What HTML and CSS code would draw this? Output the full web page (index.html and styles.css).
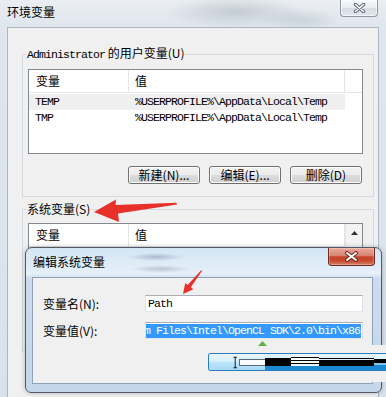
FILE: index.html
```html
<!DOCTYPE html>
<html lang="zh-CN">
<head>
<meta charset="utf-8">
<title>环境变量</title>
<link rel="stylesheet" href="styles.css">
</head>
<body>
<div class="win">
  <div class="titlebar">
    <span class="title">环境变量</span>
    <div class="cap-close">
      <svg width="13" height="10" viewBox="0 0 13 10"><path class="x-out" d="M2.5 1.5 L10.5 8.5 M10.5 1.5 L2.5 8.5"/><path class="x-in" d="M2.5 1.5 L10.5 8.5 M10.5 1.5 L2.5 8.5"/></svg>
    </div>
  </div>
  <div class="client">
    <fieldset class="group">
      <legend><span class="mono">Administrator</span> 的用户变量(U)</legend>
      <div class="list user">
        <div class="lhead"><div class="c1">变量</div><div class="c2">值</div></div>
        <div class="lbody">
          <div class="lrow inactive"><div class="c1 mono">TEMP</div><div class="c2 mono">%USERPROFILE%\AppData\Local\Temp</div></div>
          <div class="lrow"><div class="c1 mono">TMP</div><div class="c2 mono">%USERPROFILE%\AppData\Local\Temp</div></div>
        </div>
      </div>
      <div class="btnrow">
        <button class="btn">新建(N)...</button>
        <button class="btn">编辑(E)...</button>
        <button class="btn">删除(D)</button>
      </div>
    </fieldset>
    <fieldset class="group sys">
      <legend>系统变量(S)</legend>
      <div class="list syslist">
        <div class="lmain">
          <div class="lhead"><div class="c1">变量</div><div class="c2">值</div></div>
          <div class="lrow sel"></div>
        </div>
        <div class="vscroll">
          <div class="sbtn"><svg width="7" height="4" viewBox="0 0 7 4"><polygon points="0,4 3.5,0 7,4" fill="#333"/></svg></div>
        </div>
      </div>
    </fieldset>
  </div>
</div>

<div class="dlg">
  <div class="dtitlebar">
    <span class="dtitle">编辑系统变量</span>
    <div class="dclose">
      <svg width="15" height="11" viewBox="0 0 15 11"><path class="dx-out" d="M3 2 L12 9 M12 2 L3 9"/><path class="dx-in" d="M3 2 L12 9 M12 2 L3 9"/></svg>
    </div>
  </div>
  <div class="dclient">
    <div class="frow">
      <span class="flabel">变量名(N):</span>
      <div class="input"><span class="mono">Path</span></div>
    </div>
    <div class="frow">
      <span class="flabel">变量值(V):</span>
      <div class="input selected"><span class="selbox mono">m Files\Intel\OpenCL SDK\2.0\bin\x86</span></div>
    </div>
    <div class="dfoot">
      <svg class="tri" width="9" height="5" viewBox="0 0 9 5"><polygon points="0,5 4.5,0 9,5" fill="#5fb14a"/></svg>
      <div class="okbar">
        <div class="seg s1">
          <svg class="ibeam" width="5" height="13" viewBox="0 0 5 13"><path d="M0.5 0.5 H4.5 M2.5 0.5 V12.5 M0.5 12.5 H4.5" stroke="#000" stroke-width="1" fill="none"/></svg>
          <span class="tbox"></span>
        </div>
        <div class="seg s2"></div>
        <div class="seg s3"></div>
        <div class="seg s4"></div>
        <div class="seg s5"></div>
      </div>
    </div>
  </div>
</div>

<svg class="arrows" width="386" height="397" viewBox="0 0 386 397">
  <polygon points="94,212 116,199.5 115.5,205 176.5,202.8 177,204.4 118,213.5 119,222" fill="#e8302a"/>
  <polygon points="183,294 185.3,283 187.6,284.9 201.2,270.2 202,270.9 190.8,287.3 193.4,289.3" fill="#e8302a"/>
</svg>
</body>
</html>
```

FILE: styles.css
```css
* { box-sizing: border-box; }
html, body { margin: 0; padding: 0; }
body {
  width: 386px;
  height: 397px;
  overflow: hidden;
  position: relative;
  font-family: "Noto Sans CJK SC", "Noto Sans", sans-serif;
  font-size: 12px;
  color: #000;
  background: #f4f6f8;
}
.mono {
  font-family: "Liberation Mono", "Noto Sans CJK SC", monospace;
  font-size: 11.5px;
  letter-spacing: -0.9px;
}

/* outer window */
.win {
  height: 397px;
  display: flex;
  flex-direction: column;
  padding: 0 7px;
  background:
    radial-gradient(70px 16px at 235px 12px, rgba(135,145,158,.35), transparent),
    radial-gradient(40px 12px at 300px 20px, rgba(150,160,172,.3), transparent),
    linear-gradient(#eaeef2, #dfe6ed 27px, #d9e2eb);
}
.titlebar {
  height: 27px;
  display: flex;
  justify-content: space-between;
  align-items: flex-start;
}
.title { margin-top: 5px; line-height: 14px; }
.cap-close {
  width: 38px;
  height: 17px;
  margin-right: 1px;
  border: 1px solid #8d98a4;
  border-top: none;
  border-radius: 0 0 4px 4px;
  background: linear-gradient(#f7f9fb, #e6ebf0 50%, #d6dde5 50%, #e0e6ec);
  box-shadow: inset 0 0 0 1px rgba(255,255,255,.6);
  display: flex;
  align-items: center;
  justify-content: center;
}
.x-out { stroke: #5f6a76; stroke-width: 3.6; stroke-linecap: round; fill: none; }
.x-in { stroke: #fff; stroke-width: 1.6; stroke-linecap: round; fill: none; }

.client {
  flex: 1;
  background: #f0f0f0;
  border: 1px solid #aab6c3;
  border-bottom: none;
  padding-top: 18px;
}
.group {
  margin: 0 0 0 14px;
  width: 352px;
  border: 1px solid #d3dbe2;
  padding: 7px 9px 12px 5px;
}
legend {
  padding: 0 1px;
  margin-left: -2px;
  line-height: 14px;
  font-size: 12px;
}
.sys { margin-top: 5px; padding-bottom: 12px; }

/* list views */
.list {
  width: 335px;
  border: 1px solid #828790;
  background: #fff;
}
.user { height: 85px; }
.lhead {
  display: flex;
  height: 23px;
  line-height: 22px;
  border-bottom: 1px solid #e5e5e5;
}
.c1, .c2 { flex: none; white-space: nowrap; overflow: hidden; }
.c1 { width: 100px; padding-left: 6px; }
.c2 { width: 216px; padding-left: 6px; }
.lhead .c1 { padding-left: 7px; border-right: 1px solid #e5e5e5; }
.lhead .c2 { border-right: 1px solid #e5e5e5; }
.lbody { padding-top: 1px; }
.lrow { display: flex; height: 16px; line-height: 16px; width: 316px; }
.lrow.inactive { background: #efefef; }
.lrow.sel { background: #cde8ff; }

.syslist { display: flex; height: 116px; }
.lmain { width: 316px; }
.vscroll { width: 17px; background: #f3f3f3; border-left: 1px solid #e5e5e5; }
.sbtn {
  height: 17px;
  display: flex;
  align-items: center;
  justify-content: center;
}

/* buttons */
.btnrow {
  margin-top: 12px;
  display: flex;
  justify-content: flex-end;
  gap: 9px;
  padding-right: 2px;
}
.btn {
  width: 72px;
  height: 18px;
  padding: 0;
  font-family: inherit;
  font-size: 12px;
  line-height: 16px;
  color: #000;
  border: 1px solid #707070;
  border-radius: 3px;
  background: linear-gradient(#f2f2f2, #ebebeb 50%, #dddddd 50%, #cfcfcf);
  box-shadow: inset 0 0 0 1px #fcfcfc;
}

/* edit dialog */
.dlg {
  position: absolute;
  left: 25px;
  top: 247px;
  width: 357px;
  height: 146px;
  border: 1px solid #4f5a66;
  border-radius: 7px 7px 6px 6px;
  display: flex;
  flex-direction: column;
  background:
    radial-gradient(28px 4px at 130px 9px, rgba(90,105,125,.35), transparent),
    radial-gradient(30px 4px at 135px 21px, rgba(90,105,125,.3), transparent),
    linear-gradient(#d3e5f5, #e6f0f9 26px, #cbdcee 30px, #c4d7ea);
  box-shadow: 0 0 5px rgba(0,0,0,.25);
}
.dtitlebar {
  height: 29px;
  flex: none;
  display: flex;
  justify-content: space-between;
  align-items: flex-start;
  padding: 0 6px 0 7px;
}
.dtitle { margin-top: 7px; line-height: 14px; }
.dclose {
  width: 47px;
  height: 18px;
  border: 1px solid #6e2a22;
  border-top: none;
  border-radius: 0 0 4px 4px;
  background: linear-gradient(#eaaa9c, #d8836f 45%, #c4432d 52%, #c8492f 75%, #d6806a);
  box-shadow: inset 0 0 0 1px rgba(255,255,255,.25);
  display: flex;
  align-items: center;
  justify-content: center;
}
.dx-out { stroke: #6b2b22; stroke-width: 4; stroke-linecap: round; fill: none; }
.dx-in { stroke: #fff; stroke-width: 2; stroke-linecap: round; fill: none; }

.dclient {
  flex: 1;
  margin: 0 8px 8px 6px;
  background: #f0f0f0;
  border: 1px solid #8ea2b7;
  padding: 17px 0 0 10px;
}
.frow {
  display: grid;
  grid-template-columns: 102px 218px;
  align-items: center;
  height: 17px;
}
.frow + .frow { margin-top: 10px; }
.flabel { line-height: 17px; }
.input {
  height: 17px;
  border: 1px solid;
  border-color: #abadb3 #dbdfe6 #e3e9ef #e2e3ea;
  background: #fff;
  display: flex;
  align-items: center;
  overflow: hidden;
  padding: 0 2px;
  line-height: 15px;
}
.input.selected { justify-content: flex-end; padding: 0 1px; }
.selbox {
  flex: none;
  background: #3399ff;
  color: #fff;
  white-space: nowrap;
  height: 14px;
  line-height: 14px;
  padding-right: 1px;
}

.dfoot {
  position: relative;
  margin: 6px 0 0 162px;
  width: 190px;
  height: 37px;
  background: #f0f0f0;
  padding: 8px 0 0 3px;
}
.tri { position: absolute; left: 53px; top: -4px; }
.okbar {
  display: flex;
  width: 190px;
  height: 18px;
  border: 1px solid #2c7dc0;
  border-right: none;
  border-radius: 3px 0 0 3px;
  overflow: hidden;
}
.seg { height: 100%; flex: none; }
.s1 {
  width: 56px;
  display: flex;
  align-items: center;
  padding-left: 24px;
  gap: 2px;
  background: linear-gradient(#eaf6fd, #d9f0fc 45%, #bee6fd 50%, #a7d9f5);
}
.tbox {
  width: 29px;
  height: 7px;
  background: #f7fbfe;
  border: 1px solid #5a6a78;
  border-right: none;
}
.s2 { width: 26px; background: linear-gradient(#dff1fb 0 4px, #000 4px 12px, #1b8ad2 12px); }
.s3 { width: 28px; background: linear-gradient(#eef7fd 0 3px, #000 3px 4px, #fff 4px 6px, #000 6px 7px, #fff 7px 9px, #000 9px 10px, #e7f4fc 10px 12px, #1b8ad2 12px); }
.s4 { width: 55px; background: linear-gradient(#e5f3fb 0 4px, #000 4px 5px, #dff0fa 5px 6px, #000 6px 12px, #1b8ad2 12px); }
.s5 { flex: 1; background: linear-gradient(#e5f3fb 0 5px, #000 5px 9px, #7fc2ea 9px 11px, #1b8ad2 11px); }

.arrows { position: absolute; left: 0; top: 0; pointer-events: none; }
```
